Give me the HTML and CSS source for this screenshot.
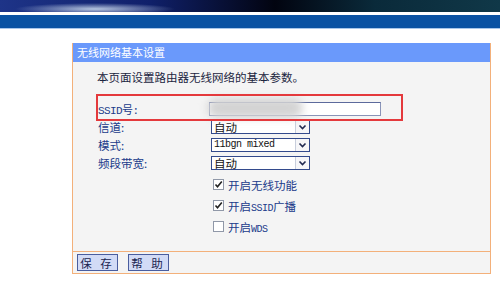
FILE: index.html
```html
<!DOCTYPE html>
<html>
  <head>
    <title>无线网络基本设置</title>
    <meta charset="utf-8">
    <link rel="stylesheet" href="styles.css">
  </head>
  <body>
    <header class="top">
      <div class="banner"></div>
      <div class="bar"></div>
    </header>

    <main class="panel">
      <div class="panel-title">无线网络基本设置</div>
      <div class="panel-body">
        <p class="intro">本页面设置路由器无线网络的基本参数。</p>

        <div class="form">
          <div class="row">
            <span class="label ssid">SSID号:</span>
            <span class="field text-field"></span>
          </div>
          <div class="row">
            <span class="label">信道:</span>
            <span class="field dropdown"><span class="value">自动</span><span class="arrow"></span></span>
          </div>
          <div class="row">
            <span class="label">模式:</span>
            <span class="field dropdown"><span class="value mono">11bgn mixed</span><span class="arrow"></span></span>
          </div>
          <div class="row">
            <span class="label">频段带宽:</span>
            <span class="field dropdown"><span class="value">自动</span><span class="arrow"></span></span>
          </div>
        </div>

        <div class="checks">
          <div class="check-row"><span class="box checked"></span><span>开启无线功能</span></div>
          <div class="check-row"><span class="box checked"></span><span>开启<span class="mono">SSID</span>广播</span></div>
          <div class="check-row"><span class="box"></span><span>开启<span class="mono">WDS</span></span></div>
        </div>

        <!-- annotation overlay: blurred ssid + red marker -->
        <div class="blur"></div>
        <div class="marker"></div>
      </div>
      <div class="panel-foot">
        <button class="btn">保 存</button>
        <button class="btn">帮 助</button>
      </div>
    </main>
  </body>
</html>
```

FILE: styles.css
```css
html, body {
  margin: 0;
  background: #fff;
  font-family: "Noto Sans CJK SC", sans-serif;
  font-size: 12px;
}
.banner {
  height: 12px;
  background:
    radial-gradient(ellipse 80px 6px at 95px 9px, rgba(200, 215, 235, 0.9), rgba(200, 215, 235, 0) 100%),
    linear-gradient(to right, #1e3488 0%, #10206a 30%, #020410 55%, #0a2a3a 75%, #103848 100%);
}
.bar {
  margin-top: 3px;
  height: 13px;
  background: #0a52a3;
  border-bottom: 1px solid #a8c6ea;
}
.panel {
  margin: 14px 0 0 72px;
  width: 417px;
  border: 1px solid #f3b07a;
  border-top: none;
  background: #f4f4f4;
}
.panel-title {
  height: 19px;
  line-height: 18px;
  padding-left: 4px;
  background: #6a99fb;
  color: #fff;
  font-size: 11px;
}
.panel-body {
  position: relative;
  padding: 0 0 14px 0;
}
.intro {
  margin: 0;
  padding: 7px 0 0 24px;
  height: 16px;
  line-height: 16px;
  color: #1b2540;
  font-size: 11.5px;
}
.form {
  margin-top: 15px;
}
.row {
  display: flex;
  align-items: center;
  height: 18px;
  padding-left: 25px;
  color: #203a8a;
  font-size: 11.5px;
}
.label {
  width: 113px;
}
.label.ssid {
  font-family: "Liberation Mono", "Noto Sans CJK SC", monospace;
  font-size: 11px;
  letter-spacing: -0.6px;
}
.field {
  display: flex;
  box-sizing: border-box;
  background: #fff;
}
.text-field {
  width: 172px;
  height: 14px;
  margin-left: -2px;
  border: 1px solid #8a94b8;
  border-top-color: #5c6a9c;
}
.dropdown {
  width: 99px;
  height: 14px;
  border: 1px solid #334a8c;
  align-items: center;
  justify-content: space-between;
  color: #111;
}
.value {
  padding-left: 2px;
  font-size: 11.5px;
  line-height: 12px;
}
.mono {
  font-family: "Liberation Mono", monospace;
  font-size: 10px;
  letter-spacing: -0.5px;
}
.arrow {
  width: 13px;
  height: 12px;
  border-left: 1px solid #c8cedc;
  background:
    url("data:image/svg+xml;utf8,<svg xmlns='http://www.w3.org/2000/svg' width='13' height='12'><path d='M3.5 4.5 L6.5 7.5 L9.5 4.5' fill='none' stroke='%23202850' stroke-width='1.6'/></svg>") no-repeat center,
    #f6f6f8;
}
.checks {
  margin-top: 2px;
  padding-left: 140px;
}
.check-row {
  display: flex;
  align-items: center;
  height: 21px;
  color: #203a8a;
  font-size: 11.5px;
}
.check-row .mono {
  font-size: 10px;
}
.box {
  box-sizing: border-box;
  width: 11px;
  height: 11px;
  margin-right: 4px;
  border: 1px solid #9098a8;
  background: #fff;
}
.box.checked {
  background:
    url("data:image/svg+xml;utf8,<svg xmlns='http://www.w3.org/2000/svg' width='9' height='9'><path d='M1.5 4.5 L3.5 6.8 L7.8 1.5' fill='none' stroke='%23222' stroke-width='1.6'/></svg>") no-repeat center,
    #fff;
}
.blur {
  position: absolute;
  left: 134px;
  top: 36px;
  width: 96px;
  height: 20px;
  background: #d4d4d4;
  border-radius: 10px;
  filter: blur(4px);
}
.marker {
  position: absolute;
  left: 23px;
  top: 32px;
  width: 307px;
  height: 27px;
  box-sizing: border-box;
  border: 2px solid #e4393c;
}
.panel-foot {
  display: flex;
  gap: 10px;
  height: 21px;
  align-items: center;
  padding-left: 4px;
  border-top: 1px solid #f3b07a;
}
.btn {
  width: 41px;
  height: 17px;
  padding: 0;
  border: 1px solid #4a5d9e;
  background: #d2dbf6;
  color: #1a2450;
  font-family: "Noto Sans CJK SC", sans-serif;
  font-size: 11.5px;
  letter-spacing: 3px;
  line-height: 14px;
}
```
